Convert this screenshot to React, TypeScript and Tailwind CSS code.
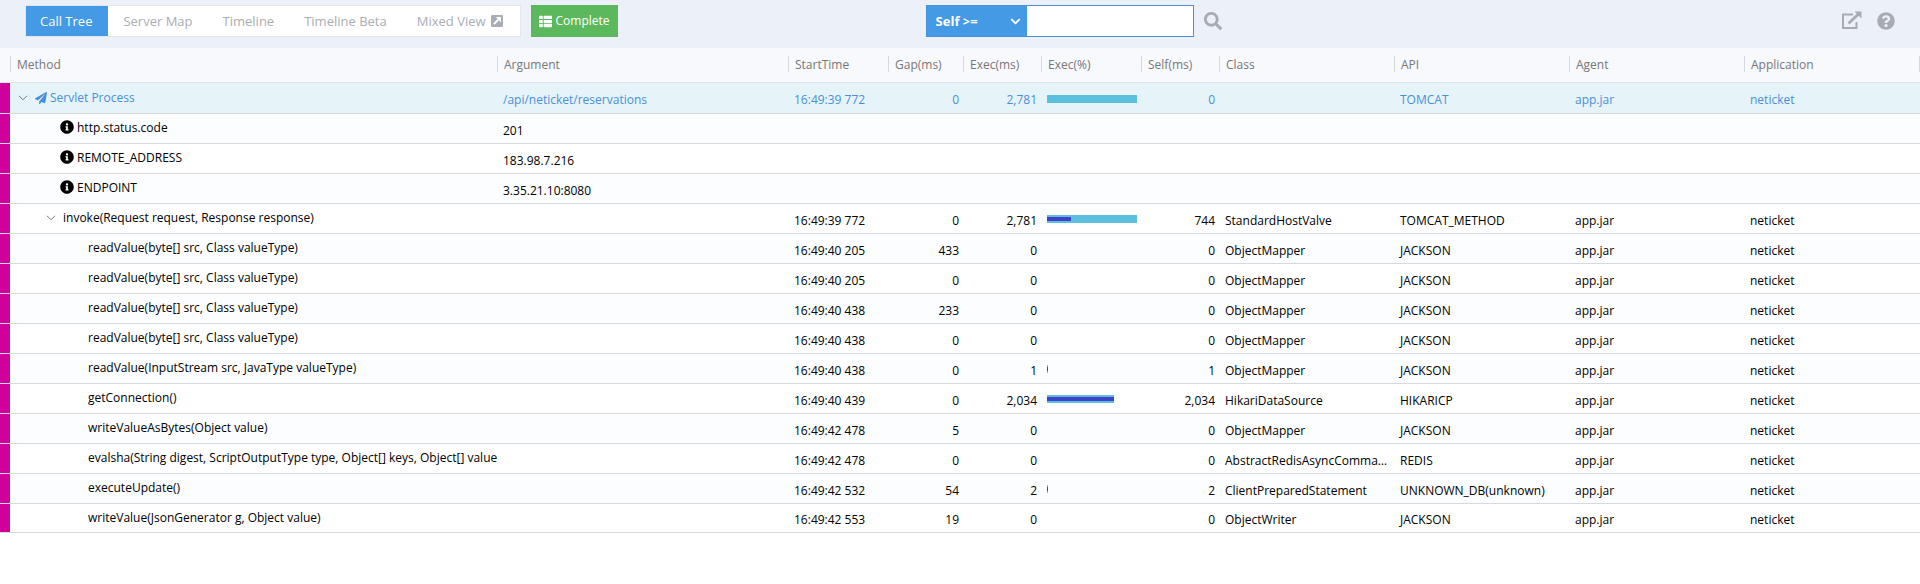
import React from "react";
import {
  FaThList,
  FaSearch,
  FaQuestionCircle,
  FaPaperPlane,
  FaInfoCircle,
  FaChevronDown,
} from "react-icons/fa";

type Row = {
  method: string;
  kind?: "root" | "info" | "branch";
  argument?: string;
  start?: string;
  gap?: string;
  exec?: string;
  total?: number;
  own?: number;
  self?: string;
  cls?: string;
  api?: string;
};

const rows: Row[] = [
  { kind: "root", method: "Servlet Process", argument: "/api/neticket/reservations", start: "16:49:39 772", gap: "0", exec: "2,781", total: 90, own: 0, self: "0", api: "TOMCAT" },
  { kind: "info", method: "http.status.code", argument: "201" },
  { kind: "info", method: "REMOTE_ADDRESS", argument: "183.98.7.216" },
  { kind: "info", method: "ENDPOINT", argument: "3.35.21.10:8080" },
  { kind: "branch", method: "invoke(Request request, Response response)", start: "16:49:39 772", gap: "0", exec: "2,781", total: 90, own: 24, self: "744", cls: "StandardHostValve", api: "TOMCAT_METHOD" },
  { method: "readValue(byte[] src, Class valueType)", start: "16:49:40 205", gap: "433", exec: "0", self: "0", cls: "ObjectMapper", api: "JACKSON" },
  { method: "readValue(byte[] src, Class valueType)", start: "16:49:40 205", gap: "0", exec: "0", self: "0", cls: "ObjectMapper", api: "JACKSON" },
  { method: "readValue(byte[] src, Class valueType)", start: "16:49:40 438", gap: "233", exec: "0", self: "0", cls: "ObjectMapper", api: "JACKSON" },
  { method: "readValue(byte[] src, Class valueType)", start: "16:49:40 438", gap: "0", exec: "0", self: "0", cls: "ObjectMapper", api: "JACKSON" },
  { method: "readValue(InputStream src, JavaType valueType)", start: "16:49:40 438", gap: "0", exec: "1", total: 1, own: 1, self: "1", cls: "ObjectMapper", api: "JACKSON" },
  { method: "getConnection()", start: "16:49:40 439", gap: "0", exec: "2,034", total: 67, own: 67, self: "2,034", cls: "HikariDataSource", api: "HIKARICP" },
  { method: "writeValueAsBytes(Object value)", start: "16:49:42 478", gap: "5", exec: "0", self: "0", cls: "ObjectMapper", api: "JACKSON" },
  { method: "evalsha(String digest, ScriptOutputType type, Object[] keys, Object[] value", start: "16:49:42 478", gap: "0", exec: "0", self: "0", cls: "AbstractRedisAsyncCommands", api: "REDIS" },
  { method: "executeUpdate()", start: "16:49:42 532", gap: "54", exec: "2", total: 1, own: 1, self: "2", cls: "ClientPreparedStatement", api: "UNKNOWN_DB(unknown)" },
  { method: "writeValue(JsonGenerator g, Object value)", start: "16:49:42 553", gap: "19", exec: "0", self: "0", cls: "ObjectWriter", api: "JACKSON" },
];

const columns = [
  "Method", "Argument", "StartTime", "Gap(ms)", "Exec(ms)", "Exec(%)",
  "Self(ms)", "Class", "API", "Agent", "Application",
];

const tabs = ["Call Tree", "Server Map", "Timeline", "Timeline Beta", "Mixed View"];

function OpenIcon() {
  return (
    <svg viewBox="0 0 21 19" className="h-[19px] w-[21px]" fill="none" stroke="currentColor" aria-hidden="true">
      <path d="M12 3.5H2V17h13.5v-6" strokeWidth="2" />
      <path d="M7.5 12.5L17 3.5" strokeWidth="2.8" />
      <path d="M13.5 .5H20.5V7.5z" fill="currentColor" stroke="none" />
    </svg>
  );
}

function OpenSquareIcon() {
  return (
    <svg viewBox="0 0 12 12" className="size-3" aria-hidden="true">
      <rect width="12" height="12" rx="1.2" fill="currentColor" />
      <path d="M2.8 9.2L8 4" stroke="#fff" strokeWidth="1.8" />
      <path d="M4.8 2H10v5.2z" fill="#fff" />
    </svg>
  );
}

function Caret() {
  return (
    <svg viewBox="0 0 10 6" className="h-[6px] w-[10px]" fill="none" stroke="#777" aria-hidden="true">
      <path d="M1 .8l4 4 4-4" />
    </svg>
  );
}

function MethodCell({ row }: { row: Row }) {
  if (row.kind === "root")
    return (
      <div className="flex items-center pl-2">
        <button type="button" aria-label="Collapse" className="mr-[7px]"><Caret /></button>
        <FaPaperPlane className="mr-[3px] size-3" />
        {row.method}
      </div>
    );
  if (row.kind === "info")
    return (
      <div className="flex items-center pl-[50px]">
        <FaInfoCircle className="mr-[3px] mb-[2px] size-[14px]" />
        {row.method}
      </div>
    );
  if (row.kind === "branch")
    return (
      <div className="flex items-center pl-9">
        <button type="button" aria-label="Collapse" className="mr-[7px]"><Caret /></button>
        {row.method}
      </div>
    );
  return <div className="overflow-hidden pl-[78px]">{row.method}</div>;
}

export default function App() {
  const cell = "overflow-hidden text-ellipsis pt-[5px] pl-[6px] pr-1";
  const num = "pt-[5px] pr-[4px] text-right";
  return (
    <div className="min-h-screen bg-white font-['Open_Sans',sans-serif] text-[12px] leading-[18px] text-black">
      <header className="grid h-12 grid-cols-[48%_auto_1fr] items-start bg-[#ecf1f9] pt-[5px]">
        <div className="flex pl-[25px]">
          <nav className="flex h-8 border border-[#e3e6ea] bg-white pr-[2px] text-[13px]" aria-label="Views">
            {tabs.map((t, i) => (
              <button
                key={t}
                type="button"
                className={
                  i === 0
                    ? "bg-[#459ae5] pr-4 pl-[14px] font-medium text-white"
                    : "flex items-center gap-[5px] px-[15px] text-[#a9adb5]"
                }
              >
                {t}
                {i === 4 && <OpenSquareIcon />}
              </button>
            ))}
          </nav>
          <button type="button" className="ml-[10px] flex h-8 items-center gap-1 bg-[#5cb85c] px-2 text-[12px] text-white">
            <FaThList className="size-[13px]" />
            Complete
          </button>
        </div>
        <div className="flex items-start pl-1">
          <div className="flex h-8 w-[268px] border border-[#4a90d6] bg-white">
            <div className="relative w-[100px] bg-[#459ae5] text-white">
              <select aria-label="Filter" className="h-full w-full appearance-none pl-[9px] text-[13px] font-bold outline-none">
                <option>Self &gt;=</option>
              </select>
              <FaChevronDown className="pointer-events-none absolute top-[10px] right-[6px] size-[11px]" />
            </div>
            <input aria-label="Filter value" className="min-w-0 flex-1 px-2 outline-none" />
          </div>
          <button type="button" aria-label="Search" className="mt-[7px] ml-[10px] text-[#a8abb2]">
            <FaSearch className="size-[18px]" />
          </button>
        </div>
        <div className="flex justify-end gap-[15px] pt-[6px] pr-[25px] text-[#a8abb2]">
          <button type="button" aria-label="Open in new window"><OpenIcon /></button>
          <button type="button" aria-label="Help"><FaQuestionCircle className="size-[18px]" /></button>
        </div>
      </header>
      <table className="w-full min-w-[1400px] table-fixed border-collapse whitespace-nowrap">
        <colgroup>
          <col className="w-[10px]" />
          <col />
          <col className="w-[291px]" />
          <col className="w-[100px]" />
          <col className="w-[75px]" />
          <col className="w-[78px]" />
          <col className="w-[100px]" />
          <col className="w-[78px]" />
          <col className="w-[175px]" />
          <col className="w-[175px]" />
          <col className="w-[175px]" />
          <col className="w-[176px]" />
        </colgroup>
        <thead>
          <tr className="h-[34px] border-b border-[#e2e5e8] bg-[#f7f9fc] text-left text-[#777]">
            <td />
            {columns.map((c) => (
              <th key={c} scope="col" className="p-0 pt-2 align-top font-normal">
                <div
                  className={
                    c === "Application"
                      ? "h-4 border-x border-[#d5d8dc] pl-[6px] leading-[17px]"
                      : "h-4 border-l border-[#d5d8dc] pl-[6px] leading-[17px]"
                  }
                >
                  {c}
                </div>
              </th>
            ))}
          </tr>
        </thead>
        <tbody>
          {rows.map((r, i) => (
            <tr
              key={i}
              className={
                i === 0
                  ? "h-[31px] border-b border-[#d6dadd] bg-[#e6f4f9] text-[#4a8fd9]"
                  : "h-[30px] border-b border-[#d6dadd] odd:bg-white even:bg-[#fbfdff] last:h-[29px]"
              }
            >
              <td className="bg-[#d0009c]" />
              <td className="overflow-hidden p-0"><MethodCell row={r} /></td>
              <td className={cell}>{r.argument}</td>
              <td className={cell}>{r.start}</td>
              <td className={num}>{r.gap}</td>
              <td className={num}>{r.exec}</td>
              <td className="p-0 pt-[2px] pl-[6px]">
                {r.total && (
                  <div className="flex h-2 items-center bg-[#5bc0de]" style={{ width: r.total }}>
                    <div className="h-1 bg-[#4040c8]" style={{ width: r.own }} />
                  </div>
                )}
              </td>
              <td className={num}>{r.self}</td>
              <td className={cell}>{r.cls}</td>
              <td className={cell}>{r.api}</td>
              <td className={cell}>{r.start && "app.jar"}</td>
              <td className={cell}>{r.start && "neticket"}</td>
            </tr>
          ))}
        </tbody>
      </table>
    </div>
  );
}
